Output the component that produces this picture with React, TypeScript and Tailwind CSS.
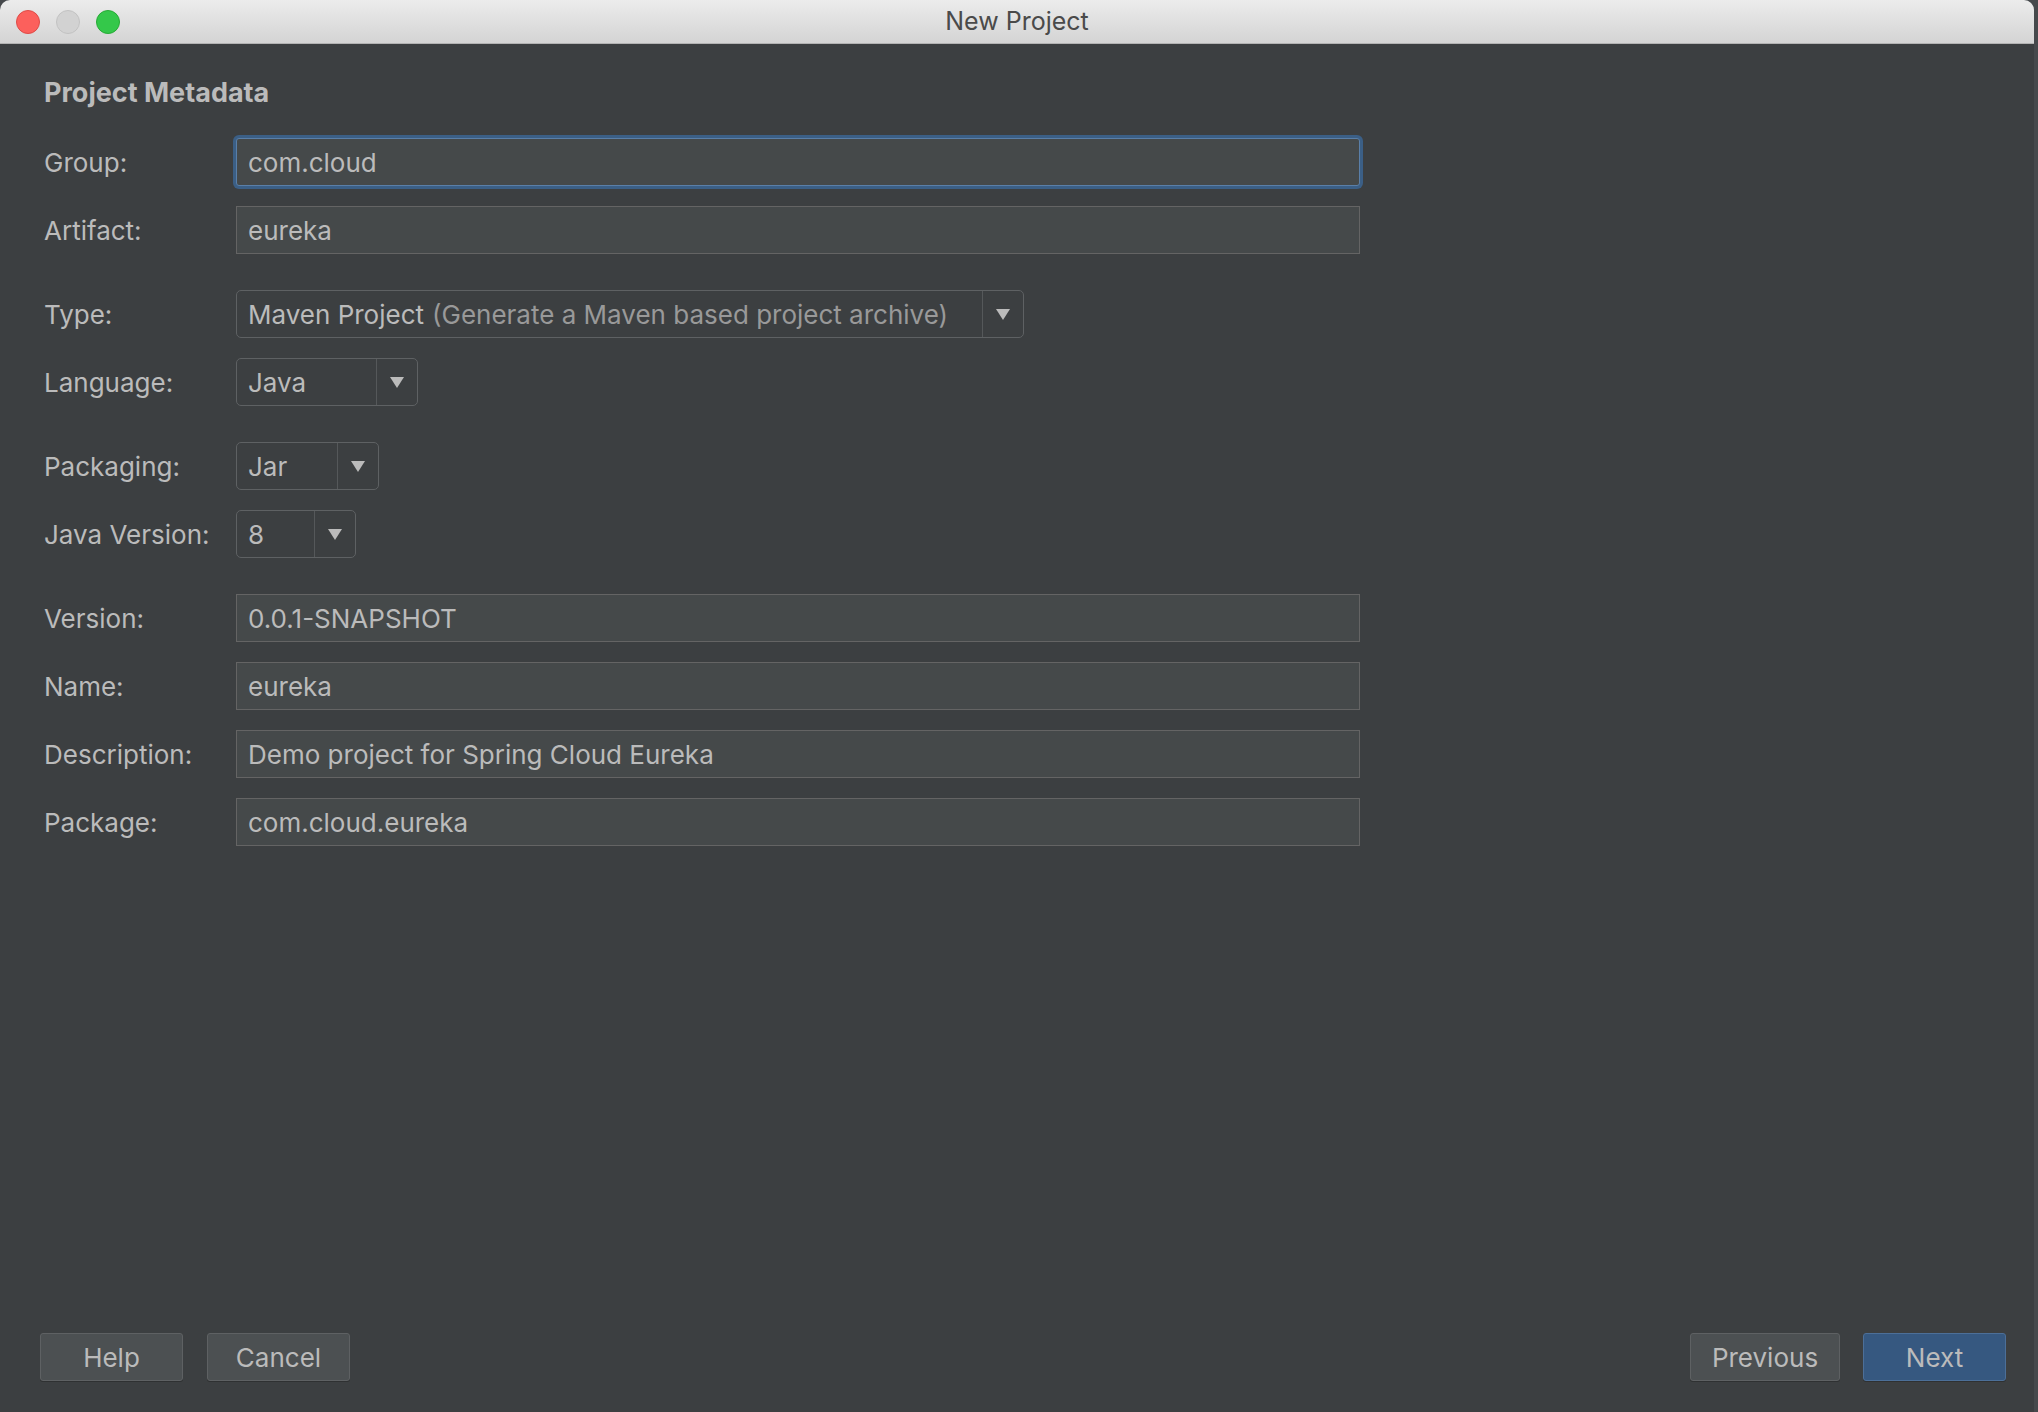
import React from "react";

const font = { fontFamily: "Inter, 'Liberation Sans', sans-serif" };

const Caret = () => (
    <svg width="14" height="11" viewBox="0 0 14 11">
        <path d="M0 0 L14 0 L7 11 Z" fill="#bbbbbb" />
    </svg>
);

const Label = ({ text }: { text: string }) => (
    <div className="w-[192px] shrink-0 text-[26px] text-[#bbbbbb]">{text}</div>
);

const TextField = ({ value, focused }: { value: string; focused?: boolean }) => (
    <div
        className={`w-[1124px] h-[48px] flex items-center px-[11px] bg-[#45494a] text-[26px] text-[#bbbbbb] ${focused ? "border border-[#5a7fa8] ring-[3px] ring-[#3b5f86] rounded-[3px]" : "border border-[#646464]"}`}
    >
        {value}
    </div>
);

const Select = ({ width, children }: { width: string; children: React.ReactNode }) => (
    <div className={`${width} h-[48px] flex items-stretch border border-[#5e6163] rounded-[5px] bg-[#3c3f41] text-[26px]`}>
        <div className="flex-1 flex items-center px-[11px] text-[#bbbbbb] whitespace-nowrap">{children}</div>
        <div className="w-[41px] flex items-center justify-center border-l border-[#55585a]">
            <Caret />
        </div>
    </div>
);

const Row = ({ label, children }: { label: string; children: React.ReactNode }) => (
    <div className="flex items-center">
        <Label text={label} />
        {children}
    </div>
);

const Button = ({ text, primary, width }: { text: string; primary?: boolean; width: string }) => (
    <div
        className={`${width} h-[48px] flex items-center justify-center text-[26px] text-[#bbbbbb] rounded-[3px] border shadow-[0_1px_0_#2f3132] ${primary ? "bg-[#365880] border-[#4c6f98]" : "bg-[#4c5052] border-[#5e6163]"}`}
    >
        {text}
    </div>
);

export default function App() {
    return (
        <div className="w-[2038px] h-[1412px] bg-[#46494c] flex" style={font}>
            <div className="w-[2034px] h-full flex flex-col rounded-t-[10px] overflow-hidden">
                {/* title bar */}
                <div className="h-[44px] shrink-0 relative flex items-center justify-center bg-gradient-to-b from-[#ececec] to-[#d4d4d4] border-b border-[#b3b3b3]">
                    <div className="absolute left-[16px] top-[10px] flex gap-[16px]">
                        <div className="w-[24px] h-[24px] rounded-full bg-[#fc605c] border border-[#de4b47]" />
                        <div className="w-[24px] h-[24px] rounded-full bg-[#d2d2d2] border border-[#c2c2c2]" />
                        <div className="w-[24px] h-[24px] rounded-full bg-[#34c84a] border border-[#27aa36]" />
                    </div>
                    <span className="text-[25px] text-[#4a4a4a]">New Project</span>
                </div>

                {/* content */}
                <div className="flex-1 bg-[#3c3f41] flex flex-col px-[44px] pt-[34px] pb-[31px]">
                    <div className="text-[27px] font-bold text-[#bbbbbb] leading-[30px]">Project Metadata</div>

                    <div className="mt-[30px] flex flex-col gap-[36px]">
                        <div className="flex flex-col gap-[20px]">
                            <Row label="Group:"><TextField value="com.cloud" focused /></Row>
                            <Row label="Artifact:"><TextField value="eureka" /></Row>
                        </div>
                        <div className="flex flex-col gap-[20px]">
                            <Row label="Type:">
                                <Select width="w-[788px]">
                                    Maven Project<span className="ml-[8px] text-[#999999]">(Generate a Maven based project archive)</span>
                                </Select>
                            </Row>
                            <Row label="Language:"><Select width="w-[182px]">Java</Select></Row>
                        </div>
                        <div className="flex flex-col gap-[20px]">
                            <Row label="Packaging:"><Select width="w-[143px]">Jar</Select></Row>
                            <Row label="Java Version:"><Select width="w-[120px]">8</Select></Row>
                        </div>
                        <div className="flex flex-col gap-[20px]">
                            <Row label="Version:"><TextField value="0.0.1-SNAPSHOT" /></Row>
                            <Row label="Name:"><TextField value="eureka" /></Row>
                            <Row label="Description:"><TextField value="Demo project for Spring Cloud Eureka" /></Row>
                            <Row label="Package:"><TextField value="com.cloud.eureka" /></Row>
                        </div>
                    </div>

                    <div className="mt-auto flex items-center">
                        <div className="flex gap-[24px] -ml-[4px]">
                            <Button text="Help" width="w-[143px]" />
                            <Button text="Cancel" width="w-[143px]" />
                        </div>
                        <div className="ml-auto flex gap-[23px] mr-[-16px]">
                            <Button text="Previous" width="w-[150px]" />
                            <Button text="Next" width="w-[143px]" primary />
                        </div>
                    </div>
                </div>
            </div>
        </div>
    );
}
